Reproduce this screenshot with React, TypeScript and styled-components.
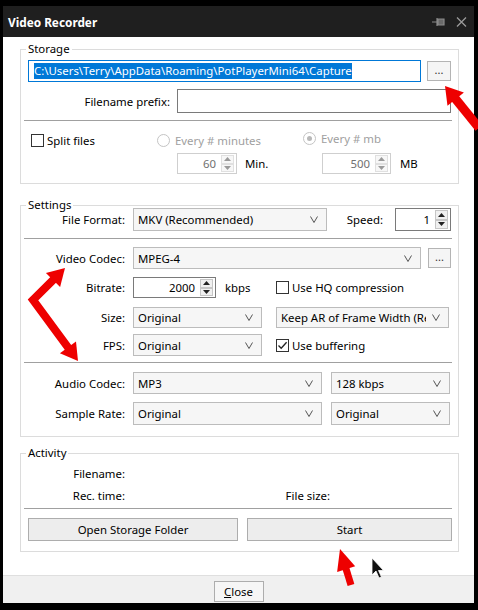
import React from 'react'
import styled, { createGlobalStyle } from 'styled-components'

const GlobalStyle = createGlobalStyle`
  html, body {
    margin: 0;
    padding: 0;
    background: #000;
  }
  body {
    font-family: "Noto Sans", "Segoe UI", Arial, sans-serif;
    font-size: 11.4px;
    color: #000;
  }
  * { box-sizing: border-box; }
`

type Pt = [number, number]

// builds a red arrow (shaft polyline + triangle heads) for the annotation layer
function arrowParts(points: Pt[], shaft: number, headLen: number, headW: number, both = false) {
  const pts = points.map((p) => [...p] as Pt)
  const heads: string[] = []
  const makeHead = (from: Pt, tip: Pt) => {
    const dx = tip[0] - from[0]
    const dy = tip[1] - from[1]
    const len = Math.hypot(dx, dy)
    const ux = dx / len
    const uy = dy / len
    const bx = tip[0] - ux * headLen
    const by = tip[1] - uy * headLen
    const h = headW / 2
    heads.push(
      [[bx - uy * h, by + ux * h], tip, [bx + uy * h, by - ux * h]]
        .map((p) => `${p[0].toFixed(1)},${p[1].toFixed(1)}`)
        .join(' ')
    )
    return [bx + ux * 1, by + uy * 1] as Pt
  }
  const n = pts.length
  pts[n - 1] = makeHead(points[n - 2], points[n - 1])
  if (both) pts[0] = makeHead(points[1], points[0])
  return {
    line: pts.map((p) => `${p[0].toFixed(1)},${p[1].toFixed(1)}`).join(' '),
    heads,
    shaft,
  }
}

const Arrow = ({ points, shaft, headLen, headW, both }: { points: Pt[]; shaft: number; headLen: number; headW: number; both?: boolean }) => {
  const a = arrowParts(points, shaft, headLen, headW, both)
  return (
    <g fill="#ee0000">
      <polyline points={a.line} fill="none" stroke="#ee0000" strokeWidth={a.shaft} strokeLinejoin="miter" />
      {a.heads.map((h, i) => (
        <polygon key={i} points={h} />
      ))}
    </g>
  )
}

export default function App() {
  return (
    <Page>
      <GlobalStyle />
      <Window>
        <TitleBar>
          <Title>Video Recorder</Title>
          <svg width="14" height="10" viewBox="0 0 14 10">
            <path d="M0 5H5M5 1V9M6 2H12V8H6Z" stroke="#8a8a8a" strokeWidth="1.2" fill="#6a6a6a" />
          </svg>
          <svg width="11" height="10" viewBox="0 0 11 10" style={{ marginLeft: 10 }}>
            <path d="M1 0.5L10 9.5M10 0.5L1 9.5" stroke="#9a9a9a" strokeWidth="1.3" />
          </svg>
        </TitleBar>

        <Client>
          <Group $mt={12} $pt={10} $pb={9}>
            <Caption>Storage</Caption>
            <Row $h={22}>
              <PathBox>
                <Selected>C:\Users\Terry\AppData\Roaming\PotPlayerMini64\Capture</Selected>
              </PathBox>
              <DotsButton $w={24} $ml={6}>...</DotsButton>
            </Row>
            <Row $mt={7} $h={24}>
              <Label $w={142} $gap={7}>Filename prefix:</Label>
              <TextBox $w={274} />
            </Row>
            <Divider $mt={7} />
            <Row $mt={11} $h={16}>
              <CheckItem $w={126} $ml={3}>
                <CheckBox />
                <span>Split files</span>
              </CheckItem>
              <CheckItem $w={146} $disabled>
                <Radio />
                <span>Every # minutes</span>
              </CheckItem>
              <CheckItem $disabled $up={2}>
                <Radio $checked />
                <span>Every # mb</span>
              </CheckItem>
            </Row>
            <Row $mt={5} $h={21}>
              <Spin value="60" w={60} ml={149} disabled />
              <Unit $ml={8} $w={77}>Min.</Unit>
              <Spin value="500" w={69} disabled />
              <Unit $ml={9}>MB</Unit>
            </Row>
          </Group>

          <Group $mt={21} $pt={2} $pb={11}>
            <Caption>Settings</Caption>
            <Row $h={23}>
              <Label $w={97}>File Format:</Label>
              <Combo $w={194} text="MKV (Recommended)" />
              <Label $w={56} $gap={12}>Speed:</Label>
              <Spin value="1" w={56} />
            </Row>
            <Divider $mt={7} />
            <Row $mt={8} $h={22}>
              <Label $w={97}>Video Codec:</Label>
              <Combo $w={288} text="MPEG-4" />
              <DotsButton $w={23} $ml={7}>...</DotsButton>
            </Row>
            <Row $mt={8} $h={21}>
              <Label $w={97}>Bitrate:</Label>
              <Spin value="2000" w={83} />
              <Unit $ml={9} $w={51}>kbps</Unit>
              <CheckItem>
                <CheckBox />
                <span>Use HQ compression</span>
              </CheckItem>
            </Row>
            <Row $mt={9} $h={21}>
              <Label $w={97}>Size:</Label>
              <Combo $w={129} text="Original" />
              <Combo $w={173} $ml={14} text="Keep AR of Frame Width (Resize Height)" />
            </Row>
            <Row $mt={6} $h={22}>
              <Label $w={97}>FPS:</Label>
              <Combo $w={129} text="Original" />
              <CheckItem $ml={14}>
                <CheckBox $checked>
                  <svg width="11" height="11" viewBox="0 0 11 11">
                    <path d="M1.5 5.5L4.2 8.3L9.6 2.3" fill="none" stroke="#222" strokeWidth="1.3" />
                  </svg>
                </CheckBox>
                <span>Use buffering</span>
              </CheckItem>
            </Row>
            <Divider $mt={6} />
            <Row $mt={9} $h={22}>
              <Label $w={97}>Audio Codec:</Label>
              <Combo $w={189} text="MP3" />
              <Combo $w={119} $ml={9} text="128 kbps" />
            </Row>
            <Row $mt={8} $h={23}>
              <Label $w={97}>Sample Rate:</Label>
              <Combo $w={189} text="Original" />
              <Combo $w={119} $ml={9} text="Original" />
            </Row>
          </Group>

          <Group $mt={16} $pt={11} $pb={10}>
            <Caption>Activity</Caption>
            <Row $h={16}>
              <Label $w={97}>Filename:</Label>
            </Row>
            <Row $mt={6} $h={16}>
              <Label $w={97}>Rec. time:</Label>
              <Label $w={197} $gap={0}>File size:</Label>
            </Row>
            <Divider $mt={5} />
            <Row $mt={9} $h={23}>
              <PushButton $w={210}>Open Storage Folder</PushButton>
              <PushButton $w={205} $ml={9}>Start</PushButton>
            </Row>
          </Group>
        </Client>

        <Footer>
          <CloseButton>
            <u>C</u>lose
          </CloseButton>
        </Footer>
      </Window>

      <Annotations width="478" height="610" viewBox="0 0 478 610">
        <Arrow points={[[479, 128], [445, 86]]} shaft={9} headLen={17} headW={21} />
        <Arrow points={[[65, 268], [33, 300], [78, 361]]} shaft={8} headLen={17} headW={20} both />
        <Arrow points={[[351, 585], [340, 549]]} shaft={7} headLen={21} headW={19} />
        <path
          d="M372 558L372 575L376 571L379 578L381.5 577L378.5 570.5L383.5 570.5Z"
          fill="#111"
          stroke="#fff"
          strokeWidth="0.8"
        />
      </Annotations>
    </Page>
  )
}

const Spin = ({ value, w, ml = 0, disabled }: { value: string; w: number; ml?: number; disabled?: boolean }) => (
  <SpinBox $w={w} $ml={ml} $disabled={disabled}>
    <SpinValue>{value}</SpinValue>
    <SpinButtons>
      <SpinButton $disabled={disabled}>
        <svg width="7" height="4" viewBox="0 0 7 4">
          <path d="M0 4L3.5 0L7 4Z" fill={disabled ? '#9a9a9a' : '#222'} />
        </svg>
      </SpinButton>
      <SpinButton $disabled={disabled}>
        <svg width="7" height="4" viewBox="0 0 7 4">
          <path d="M0 0L3.5 4L7 0Z" fill={disabled ? '#9a9a9a' : '#222'} />
        </svg>
      </SpinButton>
    </SpinButtons>
  </SpinBox>
)

const Combo = ({ text, $w, $ml = 0 }: { text: string; $w: number; $ml?: number }) => (
  <ComboBox $w={$w} $ml={$ml}>
    <ComboText>{text}</ComboText>
    <svg width="8" height="7" viewBox="0 0 8 7">
      <path d="M0.5 0.5L4 6.5L7.5 0.5" fill="none" stroke="#555" strokeWidth="1" />
    </svg>
  </ComboBox>
)

const Page = styled.div`
  position: relative;
  width: 478px;
  height: 610px;
  padding: 6px 4px 7px 3px;
  background: #000;
`

const Window = styled.div`
  height: 100%;
  display: flex;
  flex-direction: column;
  background: #fff;
`

const TitleBar = styled.div`
  flex: none;
  height: 31px;
  display: flex;
  align-items: center;
  padding: 0 7px 0 5px;
  background: #1f1f1f;
  color: #fff;
`

const Title = styled.div`
  flex: 1;
  font-weight: 700;
  font-size: 11.8px;
`

const Client = styled.div`
  flex: 1;
  display: flex;
  flex-direction: column;
  padding: 0 15px 0 17px;
`

const Group = styled.div<{ $mt: number; $pt: number; $pb: number }>`
  position: relative;
  display: flex;
  flex-direction: column;
  margin-top: ${(p) => p.$mt}px;
  padding: ${(p) => p.$pt}px 6px ${(p) => p.$pb}px 3px;
  border: 1px solid #dcdcdc;
`

const Caption = styled.span`
  position: absolute;
  top: -8px;
  left: 5px;
  padding: 0 2px;
  line-height: 14px;
  background: #fff;
`

const Row = styled.div<{ $mt?: number; $h: number }>`
  display: flex;
  align-items: center;
  height: ${(p) => p.$h}px;
  margin-top: ${(p) => p.$mt ?? 0}px;
  padding-left: 4px;
  white-space: nowrap;
`

const Label = styled.span<{ $w: number; $gap?: number }>`
  flex: none;
  width: ${(p) => p.$w}px;
  margin-right: ${(p) => p.$gap ?? 8}px;
  text-align: right;
`

const Unit = styled.span<{ $ml: number; $w?: number }>`
  flex: none;
  margin-left: ${(p) => p.$ml}px;
  width: ${(p) => (p.$w ? `${p.$w}px` : 'auto')};
`

const Divider = styled.div<{ $mt: number }>`
  height: 1px;
  margin-top: ${(p) => p.$mt}px;
  background: #a0a0a0;
`

const PathBox = styled.div`
  flex: none;
  width: 393px;
  height: 100%;
  display: flex;
  align-items: center;
  padding-left: 5px;
  border: 1px solid #0078d7;
  overflow: hidden;
`

const Selected = styled.span`
  background: #0078d7;
  color: #fff;
  line-height: 16px;
`

const TextBox = styled.div<{ $w: number }>`
  flex: none;
  width: ${(p) => p.$w}px;
  height: 100%;
  border: 1px solid #7a7a7a;
  background: #fff;
`

const DotsButton = styled.div<{ $w: number; $ml: number }>`
  flex: none;
  width: ${(p) => p.$w}px;
  height: 20px;
  margin-left: ${(p) => p.$ml}px;
  display: flex;
  align-items: center;
  justify-content: center;
  padding-bottom: 3px;
  border: 1px solid #b4b4b4;
  background: #f5f5f5;
  font-size: 11px;
  color: #333;
`

const CheckItem = styled.div<{ $w?: number; $ml?: number; $disabled?: boolean; $up?: number }>`
  flex: none;
  display: flex;
  align-items: center;
  gap: 3px;
  width: ${(p) => (p.$w ? `${p.$w}px` : 'auto')};
  margin-left: ${(p) => p.$ml ?? 0}px;
  margin-bottom: ${(p) => (p.$up ?? 0) * 2}px;
  color: ${(p) => (p.$disabled ? '#a0a0a0' : '#000')};
`

const CheckBox = styled.span<{ $checked?: boolean }>`
  flex: none;
  width: 13px;
  height: 13px;
  display: flex;
  align-items: center;
  justify-content: center;
  border: 1px solid #333;
  background: #fff;
`

const Radio = styled.span<{ $checked?: boolean }>`
  flex: none;
  width: 13px;
  height: 13px;
  margin-right: 2px;
  border-radius: 50%;
  border: 1px solid #c4c4c4;
  background: #fff;
  display: flex;
  align-items: center;
  justify-content: center;
  &::after {
    content: '';
    display: ${(p) => (p.$checked ? 'block' : 'none')};
    width: 5px;
    height: 5px;
    border-radius: 50%;
    background: #b8b8b8;
  }
`

const SpinBox = styled.div<{ $w: number; $ml: number; $disabled?: boolean }>`
  flex: none;
  width: ${(p) => p.$w}px;
  height: 100%;
  margin-left: ${(p) => p.$ml}px;
  display: flex;
  align-items: stretch;
  padding: 1px 2px 1px 0;
  border: 1px solid ${(p) => (p.$disabled ? '#cfcfcf' : '#7a7a7a')};
  background: #fff;
  color: ${(p) => (p.$disabled ? '#707070' : '#000')};
`

const SpinValue = styled.span`
  flex: 1;
  display: flex;
  align-items: center;
  justify-content: flex-end;
  padding-right: 5px;
`

const SpinButtons = styled.div`
  flex: none;
  width: 13px;
  display: flex;
  flex-direction: column;
`

const SpinButton = styled.div<{ $disabled?: boolean }>`
  flex: 1;
  display: flex;
  align-items: center;
  justify-content: center;
  border: 1px solid ${(p) => (p.$disabled ? '#e0e0e0' : '#c6c6c6')};
  background: ${(p) => (p.$disabled ? '#f7f7f7' : '#f0f0f0')};
`

const ComboBox = styled.div<{ $w: number; $ml: number }>`
  flex: none;
  width: ${(p) => p.$w}px;
  height: 100%;
  margin-left: ${(p) => p.$ml}px;
  display: flex;
  align-items: center;
  gap: 6px;
  padding: 0 8px 0 4px;
  border: 1px solid #bcbcbc;
  background: #f6f6f6;
`

const ComboText = styled.span`
  flex: 1;
  overflow: hidden;
  white-space: nowrap;
`

const PushButton = styled.div<{ $w: number; $ml?: number }>`
  flex: none;
  width: ${(p) => p.$w}px;
  height: 100%;
  margin-left: ${(p) => p.$ml ?? 0}px;
  display: flex;
  align-items: center;
  justify-content: center;
  border: 1px solid #adadad;
  background: #ededed;
`

const Footer = styled.div`
  flex: none;
  height: 28px;
  display: flex;
  justify-content: center;
  padding-top: 5px;
  border-top: 1px solid #dfdfdf;
  background: #f0f0f0;
`

const CloseButton = styled.div`
  width: 50px;
  height: 21px;
  display: flex;
  align-items: center;
  justify-content: center;
  border: 1px solid #adadad;
  background: #f6f6f6;
`

const Annotations = styled.svg`
  position: absolute;
  top: 0;
  left: 0;
  pointer-events: none;
`
